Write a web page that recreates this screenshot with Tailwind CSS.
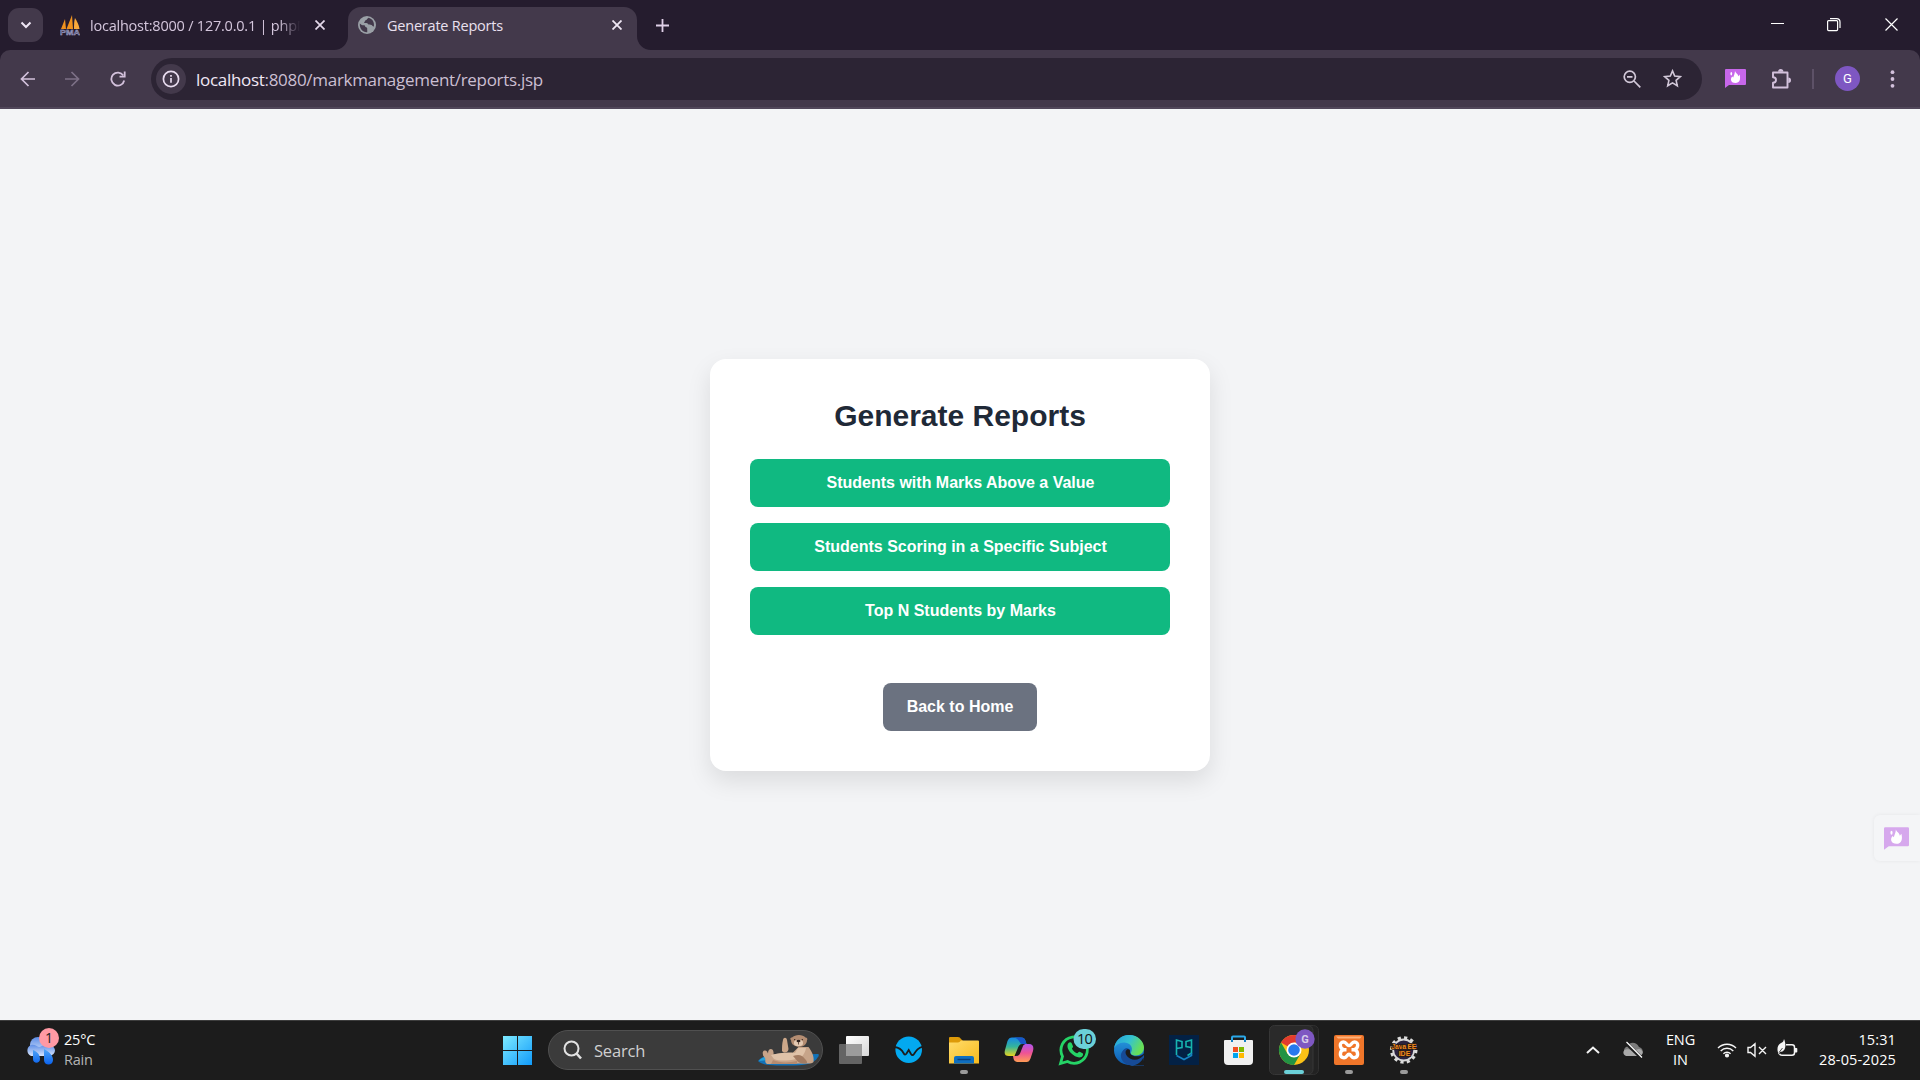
<!DOCTYPE html>
<html lang="en">
<head>
<meta charset="utf-8">
<title>Generate Reports</title>
<script src="https://cdn.jsdelivr.net/npm/@tailwindcss/browser@4"></script>
</head>
<body class="w-[1920px] h-[1080px] overflow-hidden flex flex-col bg-[#f3f4f6] font-['Segoe_UI','Open_Sans',sans-serif]">

<!-- Tab strip -->
<header class="h-[50px] shrink-0 bg-[#251c2e] flex items-stretch">
  <button class="w-[35px] h-[34px] mt-2 ml-2 rounded-[11px] bg-[#43394b] flex items-center justify-center">
    <svg width="12" height="8" viewBox="0 0 12 8" fill="none" stroke="#efe6f5" stroke-width="2"><path d="M1.500 1.500 6 6l4.500-4.500"/></svg>
  </button>
  <div class="w-[305px] flex items-center pl-[17px] pb-0.5 pt-0.5">
    <svg width="20" height="21" viewBox="0 0 20 21"><path d="M1 14 5 4l1 10zM6.500 14 12 0l1 14z" fill="#f0921e"/><path d="M14 14c0-4 0-8 1-11 2 3 4 7 4.500 11z" fill="#f8a93c"/><text x="0" y="20" font-size="8" font-weight="bold" font-family="Liberation Sans" fill="#50507c" stroke="#b9b9d8" stroke-width=".4" textLength="20" lengthAdjust="spacingAndGlyphs">PMA</text></svg>
    <span class="ml-[10px] pt-0.5 w-[210px] overflow-hidden whitespace-nowrap text-[14.5px] tracking-[-0.22px] text-[#d4c6dc] mask-r-from-90% mask-r-to-100%">localhost:8000 / 127.0.0.1 | phpM</span>
    <svg class="ml-[15px]" width="10" height="10" viewBox="0 0 10 10" stroke="#e4d8ea" stroke-width="1.700"><path d="M.5.5l9 9m0-9l-9 9"/></svg>
  </div>
  <div class="relative w-[289px] mt-[7px] rounded-t-[13px] bg-[#43394b] flex items-center pl-[10px] pb-[7px]">
    <svg class="absolute bottom-0 -left-[14px]" width="14" height="14"><path d="M14 0v14H0A14 14 0 0 0 14 0z" fill="#43394b"/></svg>
    <svg class="absolute bottom-0 -right-[14px]" width="14" height="14"><path d="M0 0v14h14A14 14 0 0 1 0 0z" fill="#43394b"/></svg>
    <svg width="18" height="18" viewBox="0 0 18 18"><circle cx="9" cy="9" r="9" fill="#9aa0a6"/><path d="M1.800 7.500c1.500 1.500 3 2 4.500 1.800 1 .2.500 1.500 1.700 1.900 1.200.2 1.300 1 1.200 1.800-.1 1 .3 1.400 0 3.200C4.800 16.500 1.500 13 1.800 7.500zM10.500 1.800c-1.500.7-1.200 2.200-2.500 2.200-1 .2-.6 1.500-1.500 1.700-.8.300-.3 1.500.9 1.300 1.500-.3 2.200 0 2.600.900.5 1.100 2.300.6 3.600 1.100 1 .4 1 1.700 2.300 1.500.6-4.500-1.500-7.500-5.400-8.700z" fill="#43394b"/></svg>
    <span class="ml-[11px] pt-0.5 w-[225px] whitespace-nowrap text-[14.5px] tracking-[-0.22px] text-[#e9e0ef]">Generate Reports</span>
    <svg width="10" height="10" viewBox="0 0 10 10" stroke="#f0e8f5" stroke-width="1.800"><path d="M.5.5l9 9m0-9l-9 9"/></svg>
  </div>
  <svg class="ml-[19px] mt-[19px]" width="13" height="13" stroke="#e0d0e8" stroke-width="1.800"><path d="M6.500 0v13M0 6.500h13"/></svg>
  <div class="ml-auto mr-[22px] flex pt-[18px] gap-[43px]">
    <svg width="14" height="14" stroke="#fff" stroke-width="1"><path d="M0 5.500h13"/></svg>
    <svg class="-ml-px" width="14" height="14" fill="none" stroke="#fff" stroke-width="1.200"><path d="M3 .6h6.500q3.500 0 3.500 3.500V10"/><rect x=".6" y="2.600" width="10" height="10" rx="1"/></svg>
    <svg class="ml-px" width="13" height="14" stroke="#fff" stroke-width="1.200"><path d="M.5.500l12 12m0-12l-12 12"/></svg>
  </div>
</header>

<!-- Toolbar -->
<nav class="h-[59px] shrink-0 bg-[#251c2e]">
  <div class="h-full rounded-t-[10px] bg-[#43394b] border-b-2 border-[#51475a] flex items-center pl-5">
    <svg width="15" height="16" viewBox="0 0 15 16" fill="none" stroke="#d3c1dc" stroke-width="1.700"><path d="M15 8H1.500M8.500 1l-7 7 7 7"/></svg>
    <svg class="ml-[30px]" width="15" height="16" viewBox="0 0 15 16" fill="none" stroke="#7d7086" stroke-width="1.700"><path d="M0 8h13.500M6.500 1l7 7-7 7"/></svg>
    <svg class="ml-[30px]" width="16" height="16" viewBox="0 0 16 16" fill="none" stroke="#d3c1dc" stroke-width="1.800"><path d="M14.200 9.500A6.500 6.500 0 1 1 13.300 4.500"/><path d="M14.700.500V5.600H9.500"/></svg>
    <div class="ml-[25px] w-[1551px] h-[42px] rounded-full bg-[#2c2434] flex items-center pl-[5px]">
      <span class="w-[30px] h-[30px] rounded-full bg-[#43394b] flex items-center justify-center">
        <svg width="18" height="18" viewBox="0 0 18 18" fill="none" stroke="#e8dcef" stroke-width="1.700"><circle cx="9" cy="9" r="7.600"/><path d="M9 8v4.800M9 5v1.800"/></svg>
      </span>
      <span class="ml-[10px] pt-0.5 text-[17px] leading-6 tracking-[-0.3px] whitespace-nowrap text-[#cbbfd2]"><span class="text-[#f0e8f5]">localhost</span>:8080/markmanagement/reports.jsp</span>
      <svg class="ml-auto" width="18" height="18" viewBox="0 0 18 18" fill="none" stroke="#d2c8d8" stroke-width="1.700"><circle cx="6.800" cy="6.800" r="5.600"/><path d="M11 11l6.300 6.300M4 6.800h5.500"/></svg>
      <svg class="ml-[22px] mr-5" width="19" height="19" viewBox="0 0 19 19" fill="none" stroke="#d2c8d8" stroke-width="1.600"><path d="M9.500 1.900l2.200 5.200 5.600.5-4.200 3.700 1.200 5.500-4.800-2.900-4.800 2.900 1.200-5.500L1.700 7.600l5.600-.5z"/></svg>
    </div>
    <svg class="ml-[23px]" width="21" height="19" viewBox="0 0 21 19"><path d="M1 0h19q1 0 1 1v14q0 1-1 1H4l-4 3V1Q0 0 1 0z" fill="#c767ea"/><path d="M10 2c.3 2 3 2.700 3.300 5.200l1.300-1.700c1.200 4.500.300 8.500-4.200 8.500-4.300 0-5.700-3.700-3.200-6.500l1.100 1C8.700 6.500 9.800 5 10 2z" fill="#fff"/><ellipse cx="6.300" cy="4.700" rx=".9" ry="1.700" fill="#fff"/></svg>
    <svg class="ml-[25px]" width="21" height="22" viewBox="0 0 21 22"><path d="M2 4.500h14.500v15H2v-4.800c4 0 4-5.500 0-5.500z" fill="none" stroke="#d3c1dc" stroke-width="1.900" stroke-linejoin="round"/><path d="M7 3.800a2.700 2.700 0 0 1 5.400 0zM17.300 9.500a2.700 2.700 0 0 1 0 5.400z" fill="#d3c1dc"/></svg>
    <span class="ml-[20px] w-0.5 h-5 bg-[#5d5167]"></span>
    <span class="ml-[21px] w-[25px] h-[25px] rounded-full bg-[#7e57c2] text-white text-[13px] font-[Roboto] flex items-center justify-center">G</span>
    <svg class="ml-[30px]" width="5" height="18" fill="#d3c1dc"><circle cx="2.500" cy="2.200" r="1.900"/><circle cx="2.500" cy="9" r="1.900"/><circle cx="2.500" cy="15.800" r="1.900"/></svg>
  </div>
</nav>

<!-- Page -->
<main class="relative h-[911px] shrink-0 bg-[#f3f4f6] flex justify-center items-start pt-[250px] font-['Liberation_Sans',Arial,sans-serif]">
  <section class="w-[500px] bg-white rounded-2xl p-10 text-center shadow-[0_10px_25px_rgba(0,0,0,0.1)]">
    <h1 class="text-[30px] leading-[34px] font-bold text-[#1f2937] mb-[26px]">Generate Reports</h1>
    <div class="flex flex-col gap-4 font-bold text-white">
      <a class="h-12 rounded-lg bg-[#10b981] py-3 pl-px leading-6">Students with Marks Above a Value</a>
      <a class="h-12 rounded-lg bg-[#10b981] py-3 pl-px leading-6">Students Scoring in a Specific Subject</a>
      <a class="h-12 rounded-lg bg-[#10b981] py-3 pl-px leading-6">Top N Students by Marks</a>
      <a class="h-12 mt-8 self-center px-6 rounded-lg bg-[#6b7280] py-3 leading-6">Back to Home</a>
    </div>
  </section>
  <div class="absolute right-0 top-[706px] w-[46px] h-[46px] rounded-l-md bg-[#f4f5f7] shadow-[0_0_4px_rgba(0,0,0,0.06)] pl-[10px] pt-3">
    <svg width="25" height="23" viewBox="0 0 21 19"><path d="M1 0h19q1 0 1 1v14q0 1-1 1H4l-4 3V1Q0 0 1 0z" fill="#d6a8ed"/><path d="M10 2c.3 2 3 2.700 3.300 5.200l1.300-1.700c1.200 4.500.300 8.500-4.200 8.500-4.300 0-5.700-3.700-3.200-6.500l1.100 1C8.700 6.500 9.800 5 10 2z" fill="#fff"/><ellipse cx="6.300" cy="4.700" rx=".9" ry="1.700" fill="#fff"/></svg>
  </div>
</main>

<!-- Taskbar -->
<footer class="h-[60px] shrink-0 bg-[#1c1c1c] border-t border-[#3d3d3d] flex text-white">
  <div class="w-[490px] flex pl-[25px]">
    <svg class="mt-[6px]" width="35" height="40" viewBox="0 0 35 40">
      <defs><linearGradient id="cl" x1="0" y1="0" x2="0" y2="1"><stop offset="0" stop-color="#5c8de8"/><stop offset="1" stop-color="#d7e4fa"/></linearGradient><linearGradient id="dr" x1="0" y1="0" x2="0" y2="1"><stop offset="0" stop-color="#52a8f8"/><stop offset="1" stop-color="#0a62ee"/></linearGradient></defs>
      <circle cx="13" cy="18" r="8" fill="url(#cl)"/><path d="M6 29a6 6 0 0 1 0-11c4-1 6 2 8 2s6-4 10-2c8 1 8 10 0 11z" fill="url(#cl)"/>
      <path d="M8 23c5 2 7 5 7 9 0 5-7 5-7 0zM19 22c6 3 9 7 9 11 0 6-9 6-9 0z" fill="url(#dr)"/>
      <circle cx="24" cy="11" r="10" fill="#ff99a4"/><text x="24" y="16" font-size="14" text-anchor="middle" font-family="Open Sans" fill="#222">1</text>
    </svg>
    <div class="ml-1 mt-[9px] text-[14.5px] leading-5 tracking-[-0.2px]"><div>25°C</div><div class="text-[#b5b5b5]">Rain</div></div>
  </div>

  <svg class="-mt-px" width="58" height="60"><defs><linearGradient id="wn" gradientUnits="userSpaceOnUse" x1="13" y1="16" x2="42" y2="45"><stop offset="0" stop-color="#7deaff"/><stop offset="1" stop-color="#119bfa"/></linearGradient></defs><path d="M13 16h14v14H13zM28 16h14v14H28zM13 31h14v14H13zM28 31h14v14H28z" fill="url(#wn)"/></svg>
  <div class="mt-[9px] w-[275px] h-10 rounded-full bg-[#3b3b3b] border border-[#505050] flex items-center pl-[14px]">
    <svg width="19" height="20" viewBox="0 0 19 20" fill="none" stroke="#e2e2e2"><circle cx="8.500" cy="8.500" r="7" stroke-width="2"/><path d="M13.500 13.500l4.500 5" stroke-width="2.600"/></svg>
    <span class="ml-[12px] pt-0.5 text-[16.5px] tracking-[-0.2px] text-[#d0d0d0]">Search</span>
    <svg class="ml-auto mr-[3px]" width="62" height="32" viewBox="0 0 62 32">
      <path d="M1 27c3-4 9-6 16-6l44-1c1 0 1 2 0 3-4 7-13 8.500-30 8.500-14 0-26 0-30-4.500z" fill="#1272b8"/><path d="M2 27c2-3 7-5 12-5l-3 4z" fill="#27a0da"/>
      <path d="M10 30c-3-2-1-4-2-6-3-3-3-7-.5-7.500 2-.5 3 1.500 3.500 3 0-3 1-4.500 3-4.500s3 3 2.500 5.500c5-1 12-1.500 19-1.500l6-6h10c3 4 6 9 5 15-1 1.500-3 1.500-5 1.500z" fill="#c7a489"/>
      <path d="M14 21c8-2 16-3 24-2l3-5h8c-1 6-4 10-10 11-9 2-17 2-22 0z" fill="#dfc2a8"/>
      <path d="M36 22c6-2 9-1 12 3 2 2 3 4 1 4.500-5 .5-8-1-10-4z" fill="#a37c62"/>
      <path d="M16 26c7 3 15 3 24 1v3H14z" fill="#b48b70"/>
      <path d="M25 17c0-4 0-7 1-11 .5-3 3.500-3 4 0l1.500 9c0 3-4 5-6.500 2z" fill="#cda88a"/>
      <path d="M34 6c-1.500-1-.5-2.500 1-2.500 3-3.500 11-3.500 13.500 0 1.500 0 2.500 1.500 1.500 2.700C50 15 34 15 34 6z" fill="#b48d72"/>
      <ellipse cx="41.500" cy="9" rx="4.600" ry="3.300" fill="#e3c9b2"/><ellipse cx="41.500" cy="7" rx="2" ry="1.300" fill="#2e211d"/><circle cx="37.700" cy="5.600" r=".7" fill="#2e211d"/><circle cx="45.300" cy="5.600" r=".7" fill="#2e211d"/><path d="M41.500 8v2.500" stroke="#4b352b" stroke-width=".8"/>
    </svg>
  </div>

  <div class="ml-1 -mt-px flex">
    <!-- Task view -->
    <svg width="55" height="60"><defs><linearGradient id="tv" x1="0" y1="0" x2="1" y2="1"><stop offset="0" stop-color="#fff"/><stop offset="1" stop-color="#d8d8d8"/></linearGradient></defs><rect x="19" y="16" width="23" height="20" rx="1" fill="url(#tv)"/><rect x="12" y="24" width="23" height="20" rx="1" fill="#646464"/><path d="M19 24h15q1 0 1 1v11H19z" fill="#9c9c9c"/></svg>
    <!-- Writer -->
    <svg width="55" height="60"><circle cx="26.700" cy="29.700" r="13.300" fill="#03a9f0"/><path d="M12.500 27c5 .5 7 2 9 6 1 2 2 2 3 .5l2.200-3.500 2.300 4c1 1.500 2 1.500 3 0 2.500-4 4-6 9-7.500" fill="none" stroke="#1c1c1c" stroke-width="1.800"/></svg>
    <!-- Explorer -->
    <svg width="55" height="60"><defs><linearGradient id="fo" x1="0" y1="0" x2="1" y2="1"><stop offset="0" stop-color="#ffdc6b"/><stop offset="1" stop-color="#f7ba1d"/></linearGradient></defs><path d="M12 18q0-1 1-1h8q2 0 3 2l2 2v6H12z" fill="#dd9a09"/><path d="M12 22.500h9q1.500 0 3-2h17q1 0 1 1V43.500H12z" fill="url(#fo)"/><path d="M17 43.500V38q0-2 2-2h16q2 0 2 2v5.500z" fill="#0f6fc0"/><path d="M20.500 39.500h13" stroke="#083f7b" stroke-width="1.400"/><rect x="23" y="50" width="8" height="4" rx="2" fill="#9a9a9a"/></svg>
    <!-- Copilot -->
    <svg width="55" height="60"><defs><linearGradient id="ca" x1="0" y1="0" x2="0" y2="1"><stop offset="0" stop-color="#1688e8"/><stop offset=".5" stop-color="#35b59a"/><stop offset="1" stop-color="#e8d51e"/></linearGradient><linearGradient id="cb" x1="0" y1="0" x2="0" y2="1"><stop offset="0" stop-color="#b054ee"/><stop offset=".5" stop-color="#ee5395"/><stop offset="1" stop-color="#ff9c55"/></linearGradient></defs><path d="M20 17.500h9c3 0 4 1.500 4.500 3.500l1 3h-4c-3 0-4 2-5 5l-3 7H17c-4 0-5-2-4-6l2.500-9c1-2.500 2.500-3.500 4.500-3.500z" fill="url(#ca)"/><path d="M22 17.500h7c3 0 4 1.500 4.500 3.500l1 3H30c-3-.5-2-5-8-6.500z" fill="#1757c9"/><path d="M34.500 24H37c4 0 5 3 4 7l-2.500 7.500c-1 2.500-2 3.500-4 3.500H26c-3 0-4-1.500-4.500-3.500L21 36h3c3 0 4-2 5-5l2-5c.7-1.500 2-2 3.500-2z" fill="url(#cb)"/></svg>
    <!-- WhatsApp -->
    <svg width="55" height="60"><path d="M13.500 43.500l2-7.200A13.200 13.200 0 1 1 20.500 41.500z" fill="none" stroke="#25d366" stroke-width="2.800"/><path d="M21.500 23c1-1.300 2.700-1 3.200.2l1.300 3c.4 1-1.300 2-1 2.600 1.200 2.200 2.700 3.500 5 4.500.8.300 1.500-2 2.600-1.500l3 1.500c1.200.7.300 3-1.200 3.700-3 1.300-7-.5-10.500-4-3.300-3.500-4.500-7.500-2.400-10z" fill="#25d366"/><rect x="26.500" y="9" width="22.500" height="20" rx="10" fill="#6bd0d8"/><text x="37.400" y="24" font-size="14.500" letter-spacing="-.8" text-anchor="middle" font-family="Open Sans" fill="#111">10</text></svg>
    <!-- Edge -->
    <svg width="55" height="60"><defs><linearGradient id="ea" x1="0" y1="0" x2="1" y2=".4"><stop offset="0" stop-color="#249fdc"/><stop offset=".55" stop-color="#35c3d0"/><stop offset="1" stop-color="#68df55"/></linearGradient><linearGradient id="eb" x1="0" y1="0" x2="0" y2="1"><stop offset="0" stop-color="#2aa2e5"/><stop offset="1" stop-color="#0d59b0"/></linearGradient></defs><circle cx="27" cy="30" r="15" fill="url(#eb)"/><path d="M12 29c1-9 8-14 15-14 9 0 15 6.500 15 12.500 0 5-4 8-8 8-3.500 0-6-1-5-3 3-6-2-10-7-10-5 0-9 3-10 6.500z" fill="url(#ea)"/><path d="M28 30c-1 2 0 6 6 6.200 3 0 6-1.200 8-3.200V46H30c-8-2-12-9-9-15 1-3 5-4 7-1z" fill="#1450a0"/><path d="M31 39c4 1 8 0 10-2 .5 0 .7.400.400 1C38 43 33 45.500 27 45c-5-1-9-6-8-11 1-3 3-5 6-6-3 5 1 10 6 11z" fill="#164a96"/><path d="M42.500 33c-2 2.500-5 3.500-8.500 3.300-4-.2-6.500-2.300-6-5.300 0-1-1-2-3-1.500-3 2-1 7 3 9 5 2.500 10 1 14-3.500z" fill="#1c1c1c"/><path d="M41.500 37.500c-2 4-6 8-12 8h13z" fill="#1c1c1c"/></svg>
    <!-- PG -->
    <svg width="55" height="60"><rect x="12" y="15" width="30" height="30" fill="#032145"/><g fill="none" stroke-width="1.600"><path d="M19.500 35V20l5.500 1.500v6l-5.500 1" stroke="#18b5b2"/><path d="M34 27.500l-5-1v-5l5.500-1.500v13l-4 2.500" stroke="#15b5ad"/><path d="M19.500 35.500l7.500 4 7.500-4V33" stroke="#1682c4"/></g></svg>
    <!-- Store -->
    <svg width="55" height="60"><path d="M20 22v-4.500q0-1 1-1h11q1 0 1 1V22" fill="none" stroke="#2ba9ea" stroke-width="2"/><path d="M12 21q0-1 1-1h27q1 0 1 1v20q0 4-4 4H16q-4 0-4-4z" fill="#f0f0f0"/><path d="M20 20v2M33 20v2" stroke="#1580c4" stroke-width="2"/><path d="M21 27h5v5h-5z" fill="#f25022"/><path d="M27 27h5v5h-5z" fill="#7fba00"/><path d="M21 33h5v5h-5z" fill="#00a4ef"/><path d="M27 33h5v5h-5z" fill="#ffb900"/></svg>
    <!-- Chrome -->
    <svg width="55" height="60"><rect x="8.500" y="5.500" width="43" height="49" rx="5" fill="#222" stroke="#303030"/><rect x="2.500" y="5.500" width="43.500" height="49" rx="5" fill="#2a2a2a" stroke="#363636"/><circle cx="27" cy="30" r="15" fill="#fbc116"/><path d="M27 30L14 22.500A15 15 0 0 1 40 22.500H27z" fill="#e33b2e"/><path d="M14 22.500A15 15 0 0 0 27 45l6.500-11.200L27 30l-6.500 3.700z" fill="#229344"/><circle cx="27" cy="30" r="7.500" fill="#fff"/><circle cx="27" cy="30" r="5.800" fill="#2779ee"/><circle cx="38" cy="19" r="9.700" fill="#7e57c2"/><text x="38" y="23" font-size="11" font-weight="bold" text-anchor="middle" font-family="Roboto" fill="#d8cce9">G</text><rect x="17" y="50" width="20" height="4" rx="2" fill="#6bd0d8"/></svg>
    <!-- XAMPP -->
    <svg width="55" height="60"><rect x="12" y="15" width="30" height="30" rx="2" fill="#f0762a"/><path d="M14 16.500h26l-2 2H16z" fill="#ffb27a"/><g fill="none" stroke="#fff" stroke-width="3.400" stroke-linejoin="round"><path d="M21.500 29.700c-4-1.500-4.500-7.700 0-7.700 3.200 0 3 3.500 5.500 3.500s2.300-3.500 5.500-3.500c4.500 0 4 6.200 0 7.700 4 1.500 4.500 8-.5 8-3 0-3-3.500-5-3.500s-2 3.500-5 3.500c-5 0-4.500-6.500-.5-8z"/><path d="M21.500 29.700h3M29.500 29.700h3"/></g><rect x="23" y="50" width="8" height="4" rx="2" fill="#9a9a9a"/></svg>
    <!-- Eclipse -->
    <svg width="55" height="60"><circle cx="26.700" cy="30" r="12.300" fill="none" stroke="#dcdcdc" stroke-width="3" stroke-dasharray="3.220 3.220"/><circle cx="26.700" cy="30" r="10.500" fill="#2b2340" stroke="#d8d8d8" stroke-width="1.800"/><g font-family="Liberation Sans" font-weight="bold" font-size="7" fill="#f38b1f" stroke="#2a1a10" stroke-width="1.600" paint-order="stroke" text-anchor="middle"><text x="27" y="29" textLength="25">Java EE</text><text x="27.500" y="35.500">IDE</text></g><rect x="23" y="50" width="8" height="4" rx="2" fill="#9a9a9a"/></svg>
  </div>

  <!-- Tray -->
  <div class="ml-auto mr-[24px] flex items-center pb-px text-[14.5px] leading-5">
    <svg width="14" height="8" fill="none" stroke="#f2f2f2" stroke-width="2"><path d="M1 7l6-5.500L13 7"/></svg>
    <svg class="ml-[23px]" width="20" height="18" viewBox="0 0 20 18"><path d="M5 15a5 5 0 0 1-1-9.500C6 1 13 0 16 6c5 1 5 8 0 9z" fill="#7b7b7b"/><path d="M3 15c-4-2-3-6 0-6.500 3-1 5 .5 7 1l6-1.500c5 1 5 6 0 7z" fill="#a9a9a9"/><path d="M2.500 1.500l16 15.500" stroke="#1c1c1c" stroke-width="3.500"/><path d="M3.500 1l15.500 15.500" stroke="#fff" stroke-width="1.300"/></svg>
    <div class="ml-[22px] w-[31px] text-center tracking-[-0.1px]">ENG<br>IN</div>
    <svg class="ml-[21px]" width="20" height="16" viewBox="0 0 20 16" fill="none" stroke="#f5f5f5" stroke-width="1.400"><path d="M1 6a12.700 12.700 0 0 1 18 0M3.700 8.900a8.900 8.900 0 0 1 12.600 0M6.400 11.700a5.100 5.100 0 0 1 7.200 0"/><circle cx="10" cy="13.500" r="1.400" fill="#f5f5f5"/></svg>
    <svg class="ml-[10px]" width="20" height="16" viewBox="0 0 20 16" fill="none" stroke="#f5f5f5" stroke-width="1.400"><path d="M1 5.500h2.500L8 1.700v12.600l-4.500-3.800H1zM12 5l7 7m0-7l-7 7"/></svg>
    <svg class="ml-[10px] mb-[3px]" width="21" height="19" viewBox="0 0 21 19"><path d="M9 5.700h6q2.500 0 2.500 2.500v5.600q0 2.500-2.500 2.500H5q-2 0-2.500-1.500" fill="none" stroke="#f5f5f5" stroke-width="1.500"/><path d="M18 9h1.500q.8 0 .8.800v3q0 .8-.8.800H18zM1 13.500C-1 7 3 4 5 3.500 6 3 6.800 1.500 7 0c2.500 5.500 2 13-4 13L1.500 15.500z" fill="#f5f5f5"/><path d="M2 13.500l3.500-4.500" stroke="#1c1c1c" stroke-width=".8"/></svg>
    <div class="ml-[20px] w-[78px] text-right whitespace-nowrap tracking-[0.13px]">15:31<br>28-05-2025</div>
  </div>
</footer>
</body>
</html>
